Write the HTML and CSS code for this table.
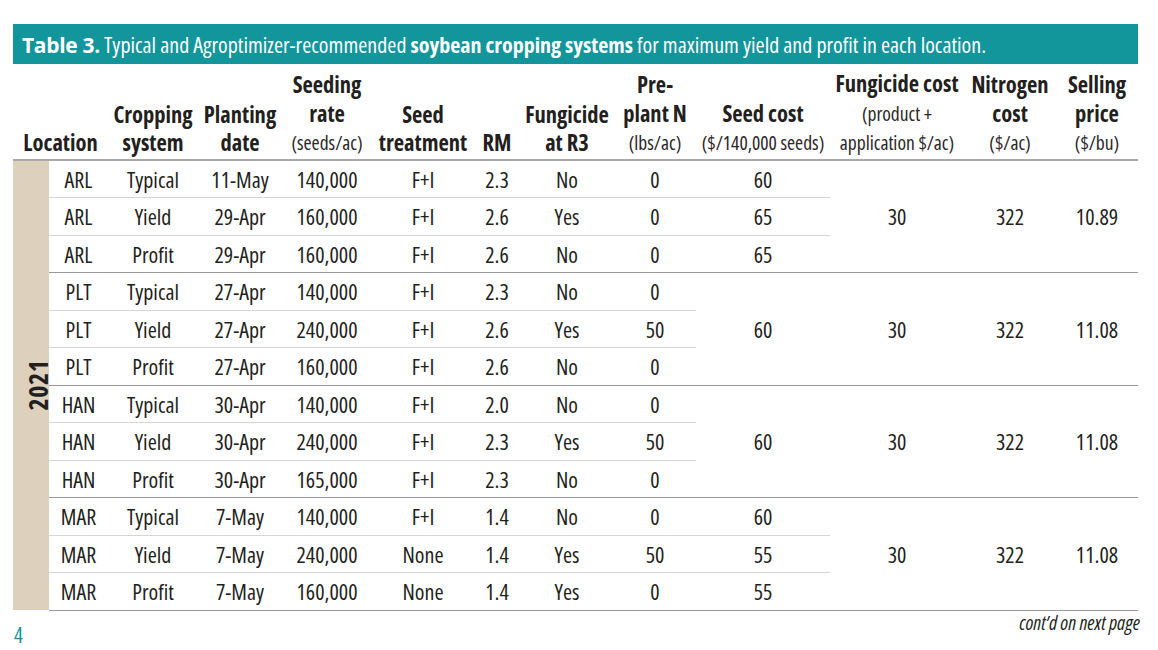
FILE: index.html
```html
<!DOCTYPE html>
<html lang="en">
<head>
<meta charset="utf-8">
<title>Table 3</title>
<link rel="stylesheet" href="styles.css">
</head>
<body>
<div class="page">
  <div class="caption"><b class="label">Table 3.</b> Typical and Agroptimizer-recommended <b>soybean cropping systems</b> for maximum yield and profit in each location.</div>
  <table class="data">
    <colgroup>
      <col class="c-year"><col class="c-loc"><col class="c-crop"><col class="c-plant"><col class="c-seed"><col class="c-treat"><col class="c-rm"><col class="c-fung"><col class="c-pre"><col class="c-scost"><col class="c-fcost"><col class="c-ncost"><col class="c-price">
    </colgroup>
    <thead>
      <tr>
        <th colspan="2">Location</th>
        <th>Cropping<br>system</th>
        <th>Planting<br>date</th>
        <th>Seeding<br>rate<br><span class="unit">(seeds/ac)</span></th>
        <th>Seed<br>treatment</th>
        <th>RM</th>
        <th>Fungicide<br>at R3</th>
        <th>Pre-<br>plant N<br><span class="unit">(lbs/ac)</span></th>
        <th>Seed cost<br><span class="unit">($/140,000 seeds)</span></th>
        <th>Fungicide cost<br><span class="unit">(product +</span><br><span class="unit">application $/ac)</span></th>
        <th>Nitrogen<br>cost<br><span class="unit">($/ac)</span></th>
        <th>Selling<br>price<br><span class="unit">($/bu)</span></th>
      </tr>
    </thead>
    <tbody>
      <tr>
        <td class="year" rowspan="12"><span>2021</span></td>
        <td>ARL</td><td>Typical</td><td>11-May</td><td>140,000</td><td>F+I</td><td>2.3</td><td>No</td><td>0</td><td>60</td>
        <td class="merged" rowspan="3">30</td><td class="merged" rowspan="3">322</td><td class="merged" rowspan="3">10.89</td>
      </tr>
      <tr><td>ARL</td><td>Yield</td><td>29-Apr</td><td>160,000</td><td>F+I</td><td>2.6</td><td>Yes</td><td>0</td><td>65</td></tr>
      <tr class="end"><td>ARL</td><td>Profit</td><td>29-Apr</td><td>160,000</td><td>F+I</td><td>2.6</td><td>No</td><td>0</td><td>65</td></tr>

      <tr>
        <td>PLT</td><td>Typical</td><td>27-Apr</td><td>140,000</td><td>F+I</td><td>2.3</td><td>No</td><td>0</td>
        <td class="merged" rowspan="3">60</td><td class="merged" rowspan="3">30</td><td class="merged" rowspan="3">322</td><td class="merged" rowspan="3">11.08</td>
      </tr>
      <tr><td>PLT</td><td>Yield</td><td>27-Apr</td><td>240,000</td><td>F+I</td><td>2.6</td><td>Yes</td><td>50</td></tr>
      <tr class="end"><td>PLT</td><td>Profit</td><td>27-Apr</td><td>160,000</td><td>F+I</td><td>2.6</td><td>No</td><td>0</td></tr>

      <tr>
        <td>HAN</td><td>Typical</td><td>30-Apr</td><td>140,000</td><td>F+I</td><td>2.0</td><td>No</td><td>0</td>
        <td class="merged" rowspan="3">60</td><td class="merged" rowspan="3">30</td><td class="merged" rowspan="3">322</td><td class="merged" rowspan="3">11.08</td>
      </tr>
      <tr><td>HAN</td><td>Yield</td><td>30-Apr</td><td>240,000</td><td>F+I</td><td>2.3</td><td>Yes</td><td>50</td></tr>
      <tr class="end"><td>HAN</td><td>Profit</td><td>30-Apr</td><td>165,000</td><td>F+I</td><td>2.3</td><td>No</td><td>0</td></tr>

      <tr>
        <td>MAR</td><td>Typical</td><td>7-May</td><td>140,000</td><td>F+I</td><td>1.4</td><td>No</td><td>0</td><td>60</td>
        <td class="merged" rowspan="3">30</td><td class="merged" rowspan="3">322</td><td class="merged" rowspan="3">11.08</td>
      </tr>
      <tr><td>MAR</td><td>Yield</td><td>7-May</td><td>240,000</td><td>None</td><td>1.4</td><td>Yes</td><td>50</td><td>55</td></tr>
      <tr class="end"><td>MAR</td><td>Profit</td><td>7-May</td><td>160,000</td><td>None</td><td>1.4</td><td>Yes</td><td>0</td><td>55</td></tr>
    </tbody>
  </table>
  <div class="footer">
    <span class="pagenum">4</span>
    <span class="contd">cont’d on next page</span>
  </div>
</div>
</body>
</html>
```
FILE: styles.css
```css
html, body {
  margin: 0;
  padding: 0;
  background: #ffffff;
}

body {
  font-family: "Open Sans", "DejaVu Sans Condensed", "Noto Sans", sans-serif;
  font-stretch: condensed;
  color: #231f20;
}

.page {
  padding: 24px 20px 0 13px;
  width: 1125px;
}

.caption {
  background: #13959c;
  color: #ffffff;
  height: 40px;
  line-height: 40px;
  padding-left: 9px;
  font-size: 22px;
  white-space: nowrap;
}

.caption b {
  font-weight: 700;
}

.caption .label {
  font-stretch: normal;
  font-size: 21px;
  letter-spacing: -0.3px;
}

.data {
  width: 1125px;
  border-collapse: collapse;
  table-layout: fixed;
}

.c-year { width: 36px; }
.c-loc { width: 59px; }
.c-crop { width: 90px; }
.c-plant { width: 84px; }
.c-seed { width: 90px; }
.c-treat { width: 102px; }
.c-rm { width: 46px; }
.c-fung { width: 94px; }
.c-pre { width: 82px; }
.c-scost { width: 134px; }
.c-fcost { width: 134px; }
.c-ncost { width: 92px; }
.c-price { width: 82px; }

.data th {
  font-size: 22.5px;
  font-weight: 700;
  line-height: 28.5px;
  vertical-align: bottom;
  text-align: center;
  padding: 6px 0 1px;
  border-bottom: 2px solid #a9a9a9;
  white-space: nowrap;
}

.data th .unit {
  font-weight: 400;
  font-size: 19.5px;
  color: #2b2728;
}

.data td {
  font-size: 22px;
  text-align: center;
  vertical-align: middle;
  height: 36.5px;
  padding: 0;
  border-bottom: 1px solid #d6d6d6;
  white-space: nowrap;
}

.data tr.end td,
.data td.merged {
  border-bottom: 1px solid #9a9a9a;
}

.data td.year {
  background: #ddd0bd;
  border-bottom: none;
  padding: 0;
}

.data td.year span {
  display: inline-block;
  transform: rotate(-90deg);
  font-weight: 700;
  font-size: 26px;
  letter-spacing: 0.5px;
}

.footer {
  display: flex;
  justify-content: space-between;
  align-items: flex-start;
  padding-left: 1px;
}

.pagenum {
  color: #13959c;
  font-size: 21px;
  line-height: 24px;
  margin-top: 12px;
}

.contd {
  font-style: italic;
  font-size: 19.5px;
  line-height: 24px;
  margin-top: 0;
  margin-right: -2px;
}
```
